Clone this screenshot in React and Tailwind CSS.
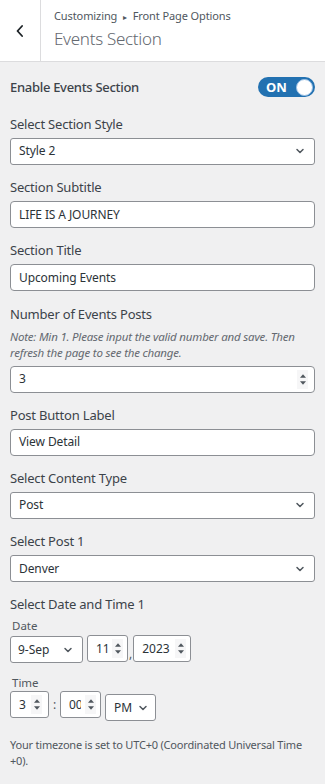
import React from 'react';

const Chevron = ({ className = '' }) => (
  <svg viewBox="0 0 12 12" className={`w-3 h-3 ${className}`} fill="none" stroke="#50575e" strokeWidth="1.5" strokeLinecap="round" strokeLinejoin="round">
    <path d="M3 4.5 L6 7.5 L9 4.5" />
  </svg>
);

const Spinner = () => (
  <div className="flex flex-col items-center justify-center w-[11px] h-full bg-[#f6f6f7] gap-[3px]">
    <svg viewBox="0 0 7 4" className="w-[6px] h-[4px]"><path d="M0 4 L3.5 0 L7 4 Z" fill="#50575e" /></svg>
    <svg viewBox="0 0 7 4" className="w-[6px] h-[4px]"><path d="M0 0 L3.5 4 L7 0 Z" fill="#50575e" /></svg>
  </div>
);

const Label = ({ children, className = '' }) => (
  <div className={`text-[13px] tracking-[-0.2px] text-[#3c434a] leading-[20px] ${className}`}>{children}</div>
);

const TextField = ({ value }) => (
  <div className="h-[27px] bg-white border border-[#8c8f94] rounded-[4px] px-[8px] flex items-center text-[12px] tracking-[-0.1px] text-[#2c3338]">
    {value}
  </div>
);

const SelectField = ({ value }) => (
  <div className="h-[27px] bg-white border border-[#8c8f94] rounded-[3px] pl-[8px] pr-[8px] flex items-center justify-between text-[12px] tracking-[-0.1px] text-[#2c3338]">
    <span>{value}</span>
    <Chevron />
  </div>
);

const Field = ({ label, children }) => (
  <div className="flex flex-col gap-[4px]">
    <Label>{label}</Label>
    {children}
  </div>
);

export default function App() {
  return (
    <div className="w-[325px] min-h-[784px] bg-[#f0f0f1] font-['Noto_Sans','Open_Sans',sans-serif]">
      {/* Header */}
      <div className="flex bg-white border-b border-[#dcdcde] h-[62px]">
        <div className="w-[41px] border-r border-[#dcdcde] flex items-center justify-center">
          <svg viewBox="0 0 12 16" className="w-[10px] h-[14px]" fill="none" stroke="#1d2327" strokeWidth="2.2" strokeLinecap="round" strokeLinejoin="round">
            <path d="M8.5 2 L3 8 L8.5 14" />
          </svg>
        </div>
        <div className="flex flex-col pl-[13px] pt-[6px]">
          <div className="text-[11px] tracking-[-0.1px] text-[#50575e] leading-[20px]">
            Customizing <span className="text-[8px] mx-[3px] align-middle">▸</span> Front Page Options
          </div>
          <div className="text-[17px] tracking-[-0.3px] text-[#646970] leading-[24px] font-light">Events Section</div>
        </div>
      </div>

      <div className="px-[10px] pt-[14px] pb-[20px] flex flex-col gap-[12.2px]">
        <div className="flex items-center justify-between h-[22px] mb-[3.8px]">
          <Label className="font-medium tracking-[-0.3px]">Enable Events Section</Label>
          <div className="w-[57px] h-[20px] rounded-full bg-[#2271b1] flex items-center justify-between pl-[8px] pr-[2px]">
            <span className="text-white text-[13px] font-bold leading-none">ON</span>
            <span className="w-[17px] h-[17px] rounded-full bg-white border border-[#9ec2e6]" />
          </div>
        </div>

        <Field label="Select Section Style"><SelectField value="Style 2" /></Field>
        <Field label="Section Subtitle"><TextField value="LIFE IS A JOURNEY" /></Field>
        <Field label="Section Title"><TextField value="Upcoming Events" /></Field>

        <div className="flex flex-col">
          <Label>Number of Events Posts</Label>
          <div className="text-[11.5px] tracking-[-0.2px] italic text-[#646970] leading-[16px] mt-[5px] mb-[5px]">
            Note: Min 1. Please input the valid number and save. Then refresh the page to see the change.
          </div>
          <div className="h-[27px] bg-white border border-[#8c8f94] rounded-[4px] pl-[8px] pr-[6px] py-[3px] flex items-center justify-between text-[12px] text-[#2c3338]">
            <span>3</span>
            <Spinner />
          </div>
        </div>

        <Field label="Post Button Label"><TextField value="View Detail" /></Field>
        <Field label="Select Content Type"><SelectField value="Post" /></Field>
        <Field label="Select Post 1"><SelectField value="Denver" /></Field>

        <div className="flex flex-col">
          <Label>Select Date and Time 1</Label>
          <div className="text-[11.5px] text-[#50575e] leading-[16px] mt-[4px] pl-[2px]">Date</div>
          <div className="flex items-center">
            <div className="w-[73px] h-[27px] mt-[2px] bg-white border border-[#8c8f94] rounded-[3px] pl-[7px] pr-[8px] flex items-center justify-between text-[12px] text-[#2c3338]">
              <span>9-Sep</span>
              <Chevron />
            </div>
            <div className="ml-[4px] w-[41px] h-[27px] bg-white border border-[#8c8f94] rounded-[3px] pl-[8px] pr-[4px] py-[3px] flex items-center justify-between text-[12px] text-[#2c3338]">
              <span>11</span>
              <Spinner />
            </div>
            <span className="text-[12px] text-[#50575e] self-end mx-[1px]">,</span>
            <div className="w-[58px] h-[27px] bg-white border border-[#8c8f94] rounded-[3px] pl-[8px] pr-[4px] py-[3px] flex items-center justify-between text-[12px] text-[#2c3338]">
              <span>2023</span>
              <Spinner />
            </div>
          </div>

          <div className="text-[11.5px] text-[#50575e] leading-[16px] mt-[12px] pl-[2px]">Time</div>
          <div className="flex items-start">
            <div className="w-[39px] h-[27px] bg-white border border-[#8c8f94] rounded-[3px] pl-[8px] pr-[6px] py-[3px] flex items-center justify-between text-[12px] text-[#2c3338]">
              <span>3</span>
              <Spinner />
            </div>
            <span className="text-[12px] text-[#50575e] w-[11px] text-center leading-[27px]">:</span>
            <div className="w-[41px] h-[27px] bg-white border border-[#8c8f94] rounded-[3px] pl-[8px] pr-[4px] py-[3px] flex items-center justify-between text-[12px] text-[#2c3338] overflow-hidden">
              <span className="w-[12px] overflow-hidden whitespace-nowrap">00</span>
              <Spinner />
            </div>
            <div className="ml-[4px] w-[51px] h-[27px] mt-[3px] bg-white border border-[#8c8f94] rounded-[3px] pl-[8px] pr-[6px] flex items-center justify-between text-[12px] text-[#2c3338]">
              <span>PM</span>
              <Chevron />
            </div>
          </div>

          <div className="text-[11px] tracking-[-0.2px] text-[#50575e] leading-[16px] mt-[16px]">
            Your timezone is set to UTC+0 (Coordinated Universal Time +0).
          </div>
        </div>
      </div>
    </div>
  );
}
